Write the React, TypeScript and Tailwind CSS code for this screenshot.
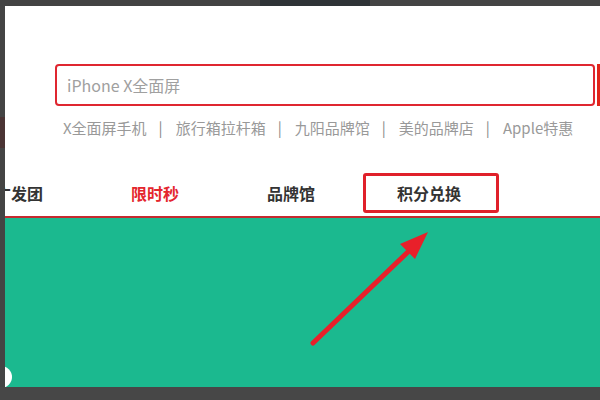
import React from "react";

const HOT_WORDS = ["X全面屏手机", "旅行箱拉杆箱", "九阳品牌馆", "美的品牌店", "Apple特惠"];

const NAV = [
  { label: "广发团", red: false },
  { label: "限时秒", red: true },
  { label: "品牌馆", red: false },
];

export default function App() {
  return (
    <div
      className="relative w-[600px] h-[400px] bg-[#454545] flex flex-col overflow-hidden"
      style={{ fontFamily: '"Noto Sans CJK SC", "Noto Sans", sans-serif' }}
    >
      {/* top strip */}
      <div className="h-[6px] flex shrink-0">
        <div className="w-[260px] bg-[#434343]" />
        <div className="w-[110px] bg-[#2f3337]" />
        <div className="flex-1 bg-[#444444]" />
      </div>

      <div className="flex flex-1 min-h-0">
        {/* left edge */}
        <div className="w-[5px] shrink-0 flex flex-col bg-[#444444]">
          <div className="h-[111px]" />
          <div className="h-[31px] bg-[#4a3434]" />
        </div>

        <div className="flex-1 bg-white flex flex-col overflow-hidden">
          {/* search */}
          <div className="flex items-stretch mt-[58px] ml-[50px] h-[42px]">
            <div className="w-[540px] border-2 border-[#df2630] rounded-[4px] flex items-center pl-[10px]">
              <span className="text-[16px] text-[#a0a0a0] leading-none">iPhone X全面屏</span>
            </div>
            <div className="ml-[2px] flex-1 bg-[#e1251b]" />
          </div>

          {/* hot words */}
          <div className="flex items-center ml-[58px] mt-[11px] h-[20px] text-[15px] text-[#999999] leading-none whitespace-nowrap">
            {HOT_WORDS.map((w, i) => (
              <React.Fragment key={w}>
                {i > 0 && <span className="ml-[12px] mr-[13px] text-[#888888]">|</span>}
                <span>{w}</span>
              </React.Fragment>
            ))}
          </div>

          {/* nav */}
          <div className="flex mt-[36px] pb-[3px] border-b-2 border-[#c52a2f] ml-[-54px] shrink-0">
            {NAV.map((n) => (
              <div
                key={n.label}
                className={`w-[136px] h-[40px] flex items-center justify-center text-[16px] font-bold ${
                  n.red ? "text-[#e4262d]" : "text-[#333333]"
                }`}
              >
                {n.label}
              </div>
            ))}
            <div className="ml-[4px] w-[136px] h-[40px] border-[3px] border-[#e0202a] rounded-[3px] flex items-center justify-center pr-[4px] text-[16px] font-bold text-[#333333]">
              积分兑换
            </div>
          </div>

          {/* banner */}
          <div className="relative flex-1 bg-[#1bb98f] overflow-hidden">
            <div className="absolute left-[-15px] top-[148px] w-[22px] h-[22px] rounded-full bg-white" />
          </div>
        </div>
      </div>

      {/* bottom strip */}
      <div className="h-[13px] shrink-0 bg-[#474747]" />

      {/* annotation arrow */}
      <svg className="absolute left-0 top-0 pointer-events-none" width="600" height="400" viewBox="0 0 600 400">
        <line x1="313" y1="343" x2="411" y2="249" stroke="#e8202a" strokeWidth="5" strokeLinecap="round" />
        <polygon points="428,232 400,244 415,259" fill="#e8202a" />
      </svg>
    </div>
  );
}
